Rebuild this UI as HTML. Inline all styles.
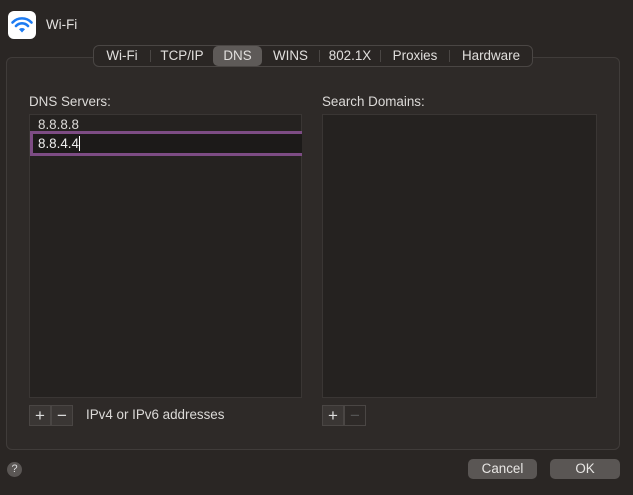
<!DOCTYPE html>
<html><head><style>
*{margin:0;padding:0;box-sizing:border-box}
body{width:633px;height:495px;background:#2a2624;font-family:"Liberation Sans",sans-serif;color:#dcdad8;position:relative;overflow:hidden;font-size:13.4px}
.a{position:absolute}
.panel{left:6px;top:57px;width:614px;height:393px;background:#2e2a28;border:1px solid #403c3a;border-radius:6px}
.tabs{left:93px;top:45px;width:440px;height:22px;background:#2a2624;border:1px solid #4a4644;border-radius:6px;display:flex;align-items:center}
.tab{height:20px;line-height:20px;text-align:center;font-size:13.4px;color:#e0dedc;position:relative}
.tab.sel{background:#5e5a58;border-radius:5px}
.sep{width:1px;height:12px;background:#4a4644}
.list{background:#252220;border:1px solid #3a3634}
.btn{border:1px solid #4a4644;background:#3a3634;width:22px;height:21px;text-align:center;line-height:19px;color:#ddd;font-size:17px}
.pb{background:#5a5654;border-radius:5px;height:20px;line-height:20px;text-align:center;color:#e8e6e4;font-size:13.4px}
</style></head><body>
<div class="a" style="left:8px;top:11px;width:28px;height:28px;background:#fff;border-radius:6px">
<svg width="28" height="28" viewBox="0 0 28 28"><g fill="none" stroke="#1e7cf2" stroke-width="2.6" stroke-linecap="round"><path d="M4.5 11.5 A13 13 0 0 1 23.5 11.5"/><path d="M8 15 A8 8 0 0 1 20 15"/></g><path d="M11 18.2 A4.5 4.5 0 0 1 17 18.2 L14 21.5Z" fill="#1e7cf2"/></svg></div>
<div class="a" style="left:46px;top:17px;color:#e4e2e0">Wi-Fi</div>
<div class="a panel"></div>
<div class="a tabs">
<div class="tab" style="width:56px">Wi-Fi</div><div class="sep"></div>
<div class="tab" style="width:62px">TCP/IP</div>
<div class="tab sel" style="width:49px">DNS</div>
<div class="tab" style="width:57px">WINS</div><div class="sep"></div>
<div class="tab" style="width:60px">802.1X</div><div class="sep"></div>
<div class="tab" style="width:68px">Proxies</div><div class="sep"></div>
<div class="tab" style="width:82px">Hardware</div>
</div>
<div class="a" style="left:29px;top:94px">DNS Servers:</div>
<div class="a" style="left:322px;top:94px">Search Domains:</div>
<div class="a list" style="left:29px;top:114px;width:273px;height:284px"></div>
<div class="a" style="left:38px;top:117px">8.8.8.8</div>
<div class="a" style="left:30px;top:131px;width:272px;height:25px;border:3px solid #7d4c84;border-right:none;background:#1c1a19"></div>
<div class="a" style="left:38px;top:136px;color:#eee">8.8.4.4<span style="display:inline-block;width:1px;height:15px;background:#fff;vertical-align:-3px"></span></div>
<div class="a list" style="left:322px;top:114px;width:275px;height:284px"></div>
<div class="a btn" style="left:29px;top:405px">+</div>
<div class="a btn" style="left:51px;top:405px">−</div>
<div class="a" style="left:86px;top:407px">IPv4 or IPv6 addresses</div>
<div class="a btn" style="left:322px;top:405px">+</div>
<div class="a btn" style="left:344px;top:405px;color:#555;background:#2e2a28">−</div>
<div class="a" style="left:7px;top:462px;width:15px;height:15px;border-radius:50%;background:#5a5654;color:#ddd;font-size:11px;text-align:center;line-height:15px">?</div>
<div class="a pb" style="left:468px;top:459px;width:69px">Cancel</div>
<div class="a pb" style="left:550px;top:459px;width:70px">OK</div>
</body></html>
